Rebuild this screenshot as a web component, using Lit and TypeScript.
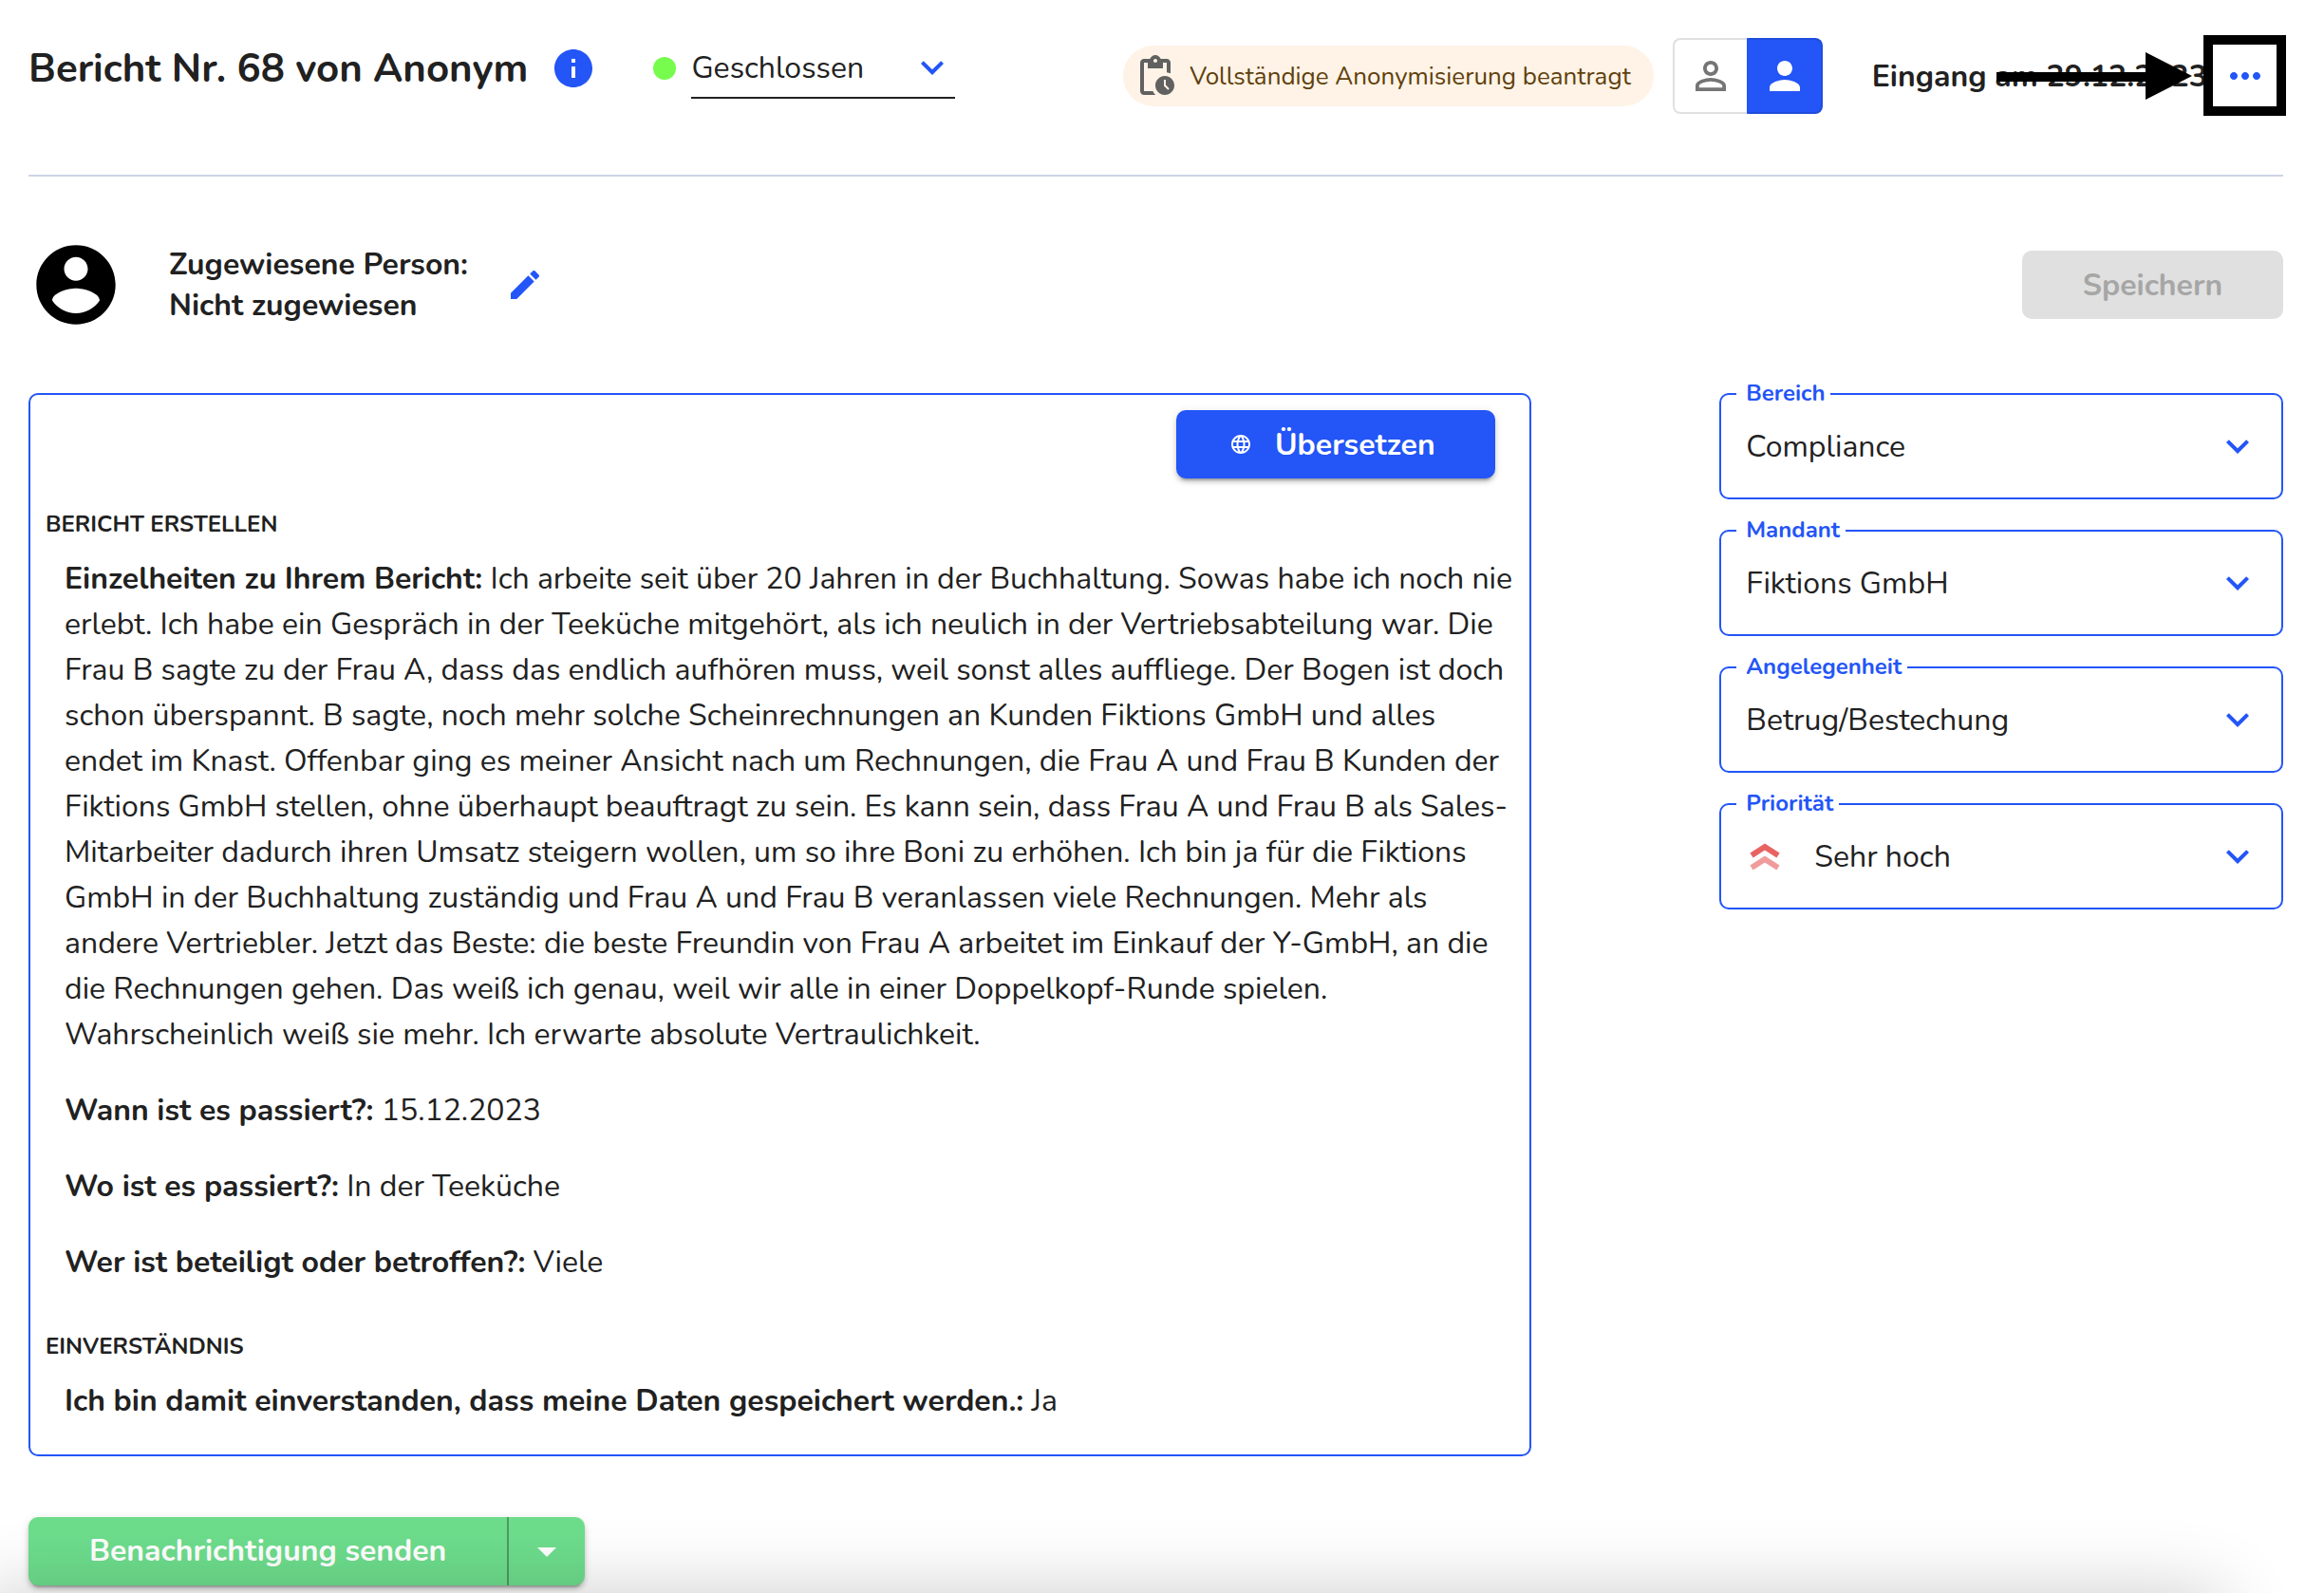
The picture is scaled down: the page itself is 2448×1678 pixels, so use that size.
import { LitElement, html, css, svg, nothing } from "lit";
import { customElement, property, state } from "lit/decorators.js";
import { classMap } from "lit/directives/class-map.js";

const icons = {
  info: "M12 2C6.48 2 2 6.48 2 12s4.48 10 10 10 10-4.48 10-10S17.52 2 12 2zm1 15h-2v-6h2v6zm0-8h-2V7h2v2z",
  expand: "M16.59 8.59 12 13.17 7.41 8.59 6 10l6 6 6-6z",
  pending:
    "M17 12c-2.76 0-5 2.24-5 5s2.24 5 5 5 5-2.24 5-5-2.24-5-5-5zm1.65 7.35L16.5 17.2V14h1v2.79l1.85 1.85-.7.71zM18 3h-3.18C14.4 1.84 13.3 1 12 1s-2.4.84-2.82 2H6c-1.1 0-2 .9-2 2v15c0 1.1.9 2 2 2h6.11c-.59-.57-1.07-1.25-1.42-2H6V5h2v3h8V5h2v5.08c.71.1 1.38.31 2 .6V5c0-1.1-.9-2-2-2zm-6 2c-.55 0-1-.45-1-1s.45-1 1-1 1 .45 1 1-.45 1-1 1z",
  personOutline:
    "M12 5.9c1.16 0 2.1.94 2.1 2.1s-.94 2.1-2.1 2.1S9.9 9.16 9.9 8s.94-2.1 2.1-2.1m0 9c2.97 0 6.1 1.46 6.1 2.1v1.1H5.9V17c0-.64 3.13-2.1 6.1-2.1M12 4C9.79 4 8 5.79 8 8s1.79 4 4 4 4-1.79 4-4-1.79-4-4-4zm0 9c-2.67 0-8 1.34-8 4v3h16v-3c0-2.66-5.33-4-8-4z",
  person:
    "M12 12c2.21 0 4-1.79 4-4s-1.79-4-4-4-4 1.79-4 4 1.79 4 4 4zm0 2c-2.67 0-8 1.34-8 4v2h16v-2c0-2.66-5.33-4-8-4z",
  more: "M6 10c-1.1 0-2 .9-2 2s.9 2 2 2 2-.9 2-2-.9-2-2-2zm12 0c-1.1 0-2 .9-2 2s.9 2 2 2 2-.9 2-2-.9-2-2-2zm-6 0c-1.1 0-2 .9-2 2s.9 2 2 2 2-.9 2-2-.9-2-2-2z",
  account:
    "M12 2C6.48 2 2 6.48 2 12s4.48 10 10 10 10-4.48 10-10S17.52 2 12 2zm0 3c1.66 0 3 1.34 3 3s-1.34 3-3 3-3-1.34-3-3 1.34-3 3-3zm0 14.2c-2.5 0-4.71-1.28-6-3.22.03-1.99 4-3.08 6-3.08 1.99 0 5.97 1.09 6 3.08-1.29 1.94-3.5 3.22-6 3.22z",
  edit: "M3 17.25V21h3.75L17.81 9.94l-3.75-3.75L3 17.25zM20.71 7.04c.39-.39.39-1.02 0-1.41l-2.34-2.34c-.39-.39-1.02-.39-1.41 0l-1.83 1.83 3.75 3.75 1.83-1.83z",
  globe:
    "M11.99 2C6.47 2 2 6.48 2 12s4.47 10 9.99 10C17.52 22 22 17.52 22 12S17.52 2 11.99 2zm6.93 6h-2.95c-.32-1.25-.78-2.45-1.38-3.56 1.84.63 3.37 1.91 4.33 3.56zM12 4.04c.83 1.2 1.48 2.53 1.91 3.96h-3.82c.43-1.43 1.08-2.76 1.91-3.96zM4.26 14C4.1 13.36 4 12.69 4 12s.1-1.36.26-2h3.38c-.08.66-.14 1.32-.14 2s.06 1.34.14 2H4.26zm.82 2h2.95c.32 1.25.78 2.45 1.38 3.56-1.84-.63-3.37-1.9-4.33-3.56zm2.95-8H5.08c.96-1.66 2.49-2.93 4.33-3.56C8.81 5.55 8.35 6.75 8.03 8zM12 19.96c-.83-1.2-1.48-2.53-1.91-3.96h3.82c-.43 1.43-1.08 2.76-1.91 3.96zM14.34 14H9.66c-.09-.66-.16-1.32-.16-2s.07-1.35.16-2h4.68c.09.65.16 1.32.16 2s-.07 1.34-.16 2zm.25 5.56c.6-1.11 1.06-2.31 1.38-3.56h2.95c-.96 1.65-2.49 2.93-4.33 3.56zM16.36 14c.08-.66.14-1.32.14-2s-.06-1.34-.14-2h3.38c.16.64.26 1.31.26 2s-.1 1.36-.26 2h-3.38z",
  dropDown: "m7 10 5 5 5-5z",
};

const icon = (name: keyof typeof icons) =>
  html`<svg class="icon" viewBox="0 0 24 24" aria-hidden="true">${svg`<path d=${icons[name]} />`}</svg>`;

const base = css`
  * {
    box-sizing: border-box;
  }
  button,
  select {
    margin: 0;
    padding: 0;
    border: 0;
    background: none;
    color: inherit;
    font: inherit;
    cursor: pointer;
  }
  select {
    appearance: none;
  }
  .icon {
    display: block;
    flex: none;
    width: 48px;
    height: 48px;
    fill: currentColor;
  }
`;

@customElement("select-field")
class SelectField extends LitElement {
  @property() label = "";
  @property({ attribute: false }) options: string[] = [];
  @property({ type: Boolean }) priority = false;

  static styles = [
    base,
    css`
      :host {
        display: block;
      }
      .field {
        position: relative;
        display: grid;
        grid-template-columns: auto 1fr;
        align-items: center;
        height: 112px;
        border: 2px solid #2355f7;
        border-radius: 10px;
      }
      .label {
        position: absolute;
        top: -18px;
        left: 16px;
        padding: 0 6px 0 10px;
        background: #fff;
        color: #2355f7;
        font-size: 24px;
        font-weight: 700;
        line-height: 32px;
      }
      .select {
        grid-area: 1 / 2;
        width: 100%;
        height: 100%;
        padding: 2px 72px 0 26px;
      }
      .priority .select {
        padding-left: 36px;
      }
      .icon {
        grid-area: 1 / 2;
        justify-self: end;
        margin-right: 22px;
        color: #2355f7;
        pointer-events: none;
      }
      .level {
        grid-area: 1 / 1;
        width: 32px;
        height: 32px;
        margin-left: 30px;
        fill: none;
        stroke: #e96363;
        stroke-width: 6;
      }
      .level-low {
        stroke: #f09c9c;
      }
    `,
  ];

  render() {
    return html`<div class=${classMap({ field: true, priority: this.priority })}>
      <label class="label" for="control">${this.label}</label>
      ${this.priority
        ? html`<svg class="level" viewBox="0 0 32 32" aria-hidden="true">
            <path class="level-low" d="M2 28 16 19 30 28" />
            <path d="M2 15 16 6 30 15" />
          </svg>`
        : nothing}
      <select class="select" id="control">
        ${this.options.map((o) => html`<option>${o}</option>`)}
      </select>
      ${icon("expand")}
    </div>`;
  }
}

interface Answer {
  question: string;
  answer: string;
}

const sections: { title: string; answers: Answer[] }[] = [
  {
    title: "BERICHT ERSTELLEN",
    answers: [
      {
        question: "Einzelheiten zu Ihrem Bericht:",
        answer:
          "Ich arbeite seit über 20 Jahren in der Buchhaltung. Sowas habe ich noch nie erlebt. Ich habe ein Gespräch in der Teeküche mitgehört, als ich neulich in der Vertriebsabteilung war. Die Frau B sagte zu der Frau A, dass das endlich aufhören muss, weil sonst alles auffliege. Der Bogen ist doch schon überspannt. B sagte, noch mehr solche Scheinrechnungen an Kunden Fiktions GmbH und alles endet im Knast. Offenbar ging es meiner Ansicht nach um Rechnungen, die Frau A und Frau B Kunden der Fiktions GmbH stellen, ohne überhaupt beauftragt zu sein. Es kann sein, dass Frau A und Frau B als Sales-Mitarbeiter dadurch ihren Umsatz steigern wollen, um so ihre Boni zu erhöhen. Ich bin ja für die Fiktions GmbH in der Buchhaltung zuständig und Frau A und Frau B veranlassen viele Rechnungen. Mehr als andere Vertriebler. Jetzt das Beste: die beste Freundin von Frau A arbeitet im Einkauf der Y-GmbH, an die die Rechnungen gehen. Das weiß ich genau, weil wir alle in einer Doppelkopf-Runde spielen. Wahrscheinlich weiß sie mehr. Ich erwarte absolute Vertraulichkeit.",
      },
      { question: "Wann ist es passiert?:", answer: "15.12.2023" },
      { question: "Wo ist es passiert?:", answer: "In der Teeküche" },
      { question: "Wer ist beteiligt oder betroffen?:", answer: "Viele" },
    ],
  },
  {
    title: "EINVERSTÄNDNIS",
    answers: [
      { question: "Ich bin damit einverstanden, dass meine Daten gespeichert werden.:", answer: "Ja" },
    ],
  },
];

@customElement("app-root")
class AppRoot extends LitElement {
  @state() private identified = true;

  static styles = [
    base,
    css`
      :host {
        display: block;
        min-height: 100vh;
        padding: 40px 43px 8px 30px;
        background: #fff;
        color: #212121;
        font-family: Nunito, "Open Sans", sans-serif;
        font-size: 32px;
        line-height: 44px;
      }
      h1,
      h2,
      p {
        margin: 0;
      }
      .header {
        display: flex;
        align-items: flex-start;
        justify-content: space-between;
        padding-bottom: 64px;
        border-bottom: 2px solid #ccd5e5;
      }
      .case,
      .meta {
        display: flex;
        align-items: center;
        white-space: nowrap;
      }
      .case {
        height: 64px;
      }
      .meta {
        height: 80px;
      }
      .title,
      .status-select,
      .chip-text,
      .received,
      .save,
      .translate-text {
        padding-top: 2px;
      }
      .title {
        font-size: 42px;
        font-weight: 700;
        line-height: 64px;
      }
      .blue {
        color: #2355f7;
      }
      .info {
        margin: 0 60px 0 24px;
      }
      .dot {
        width: 24px;
        height: 24px;
        margin-right: 16px;
        border-radius: 50%;
        background: #77fc4d;
      }
      .status {
        display: grid;
        align-items: center;
        width: 278px;
        height: 64px;
        border-bottom: 2px solid #212121;
      }
      .status-select {
        grid-area: 1 / 1;
        width: 100%;
        height: 100%;
      }
      .status .icon {
        grid-area: 1 / 1;
        justify-self: end;
        color: #2355f7;
        pointer-events: none;
      }
      .chip {
        display: flex;
        align-items: center;
        gap: 12px;
        height: 64px;
        margin-right: 20px;
        padding: 0 24px 0 10px;
        border-radius: 32px;
        background: #fef3e6;
        color: #5f400c;
        font-size: 26px;
      }
      .chip .icon {
        color: #616161;
      }
      .toggle {
        display: flex;
        margin-right: 52px;
      }
      .toggle-button {
        display: grid;
        place-items: center;
        width: 78px;
        height: 80px;
        border: 2px solid #e0e0e0;
        border-right: 0;
        border-radius: 8px 0 0 8px;
        color: #757575;
      }
      .toggle-button:last-child {
        width: 80px;
        border-right: 2px solid #e0e0e0;
        border-radius: 0 8px 8px 0;
      }
      .toggle .selected {
        border-color: #1f4cdd;
        background: #2355f7;
        color: #fff;
      }
      .toggle .selected:last-child {
        border-left-color: #2355f7;
        border-right-color: #1f4cdd;
      }
      .received {
        font-weight: 700;
      }
      .actions {
        position: relative;
        width: 80px;
        height: 80px;
      }
      .more {
        display: grid;
        place-items: center;
        width: 80px;
        height: 80px;
      }
      .frame {
        position: absolute;
        inset: -3px -3px -2px -4px;
        border: 10px solid #000;
        pointer-events: none;
      }
      .arrow {
        position: absolute;
        top: 15px;
        right: 96px;
        width: 206px;
        height: 50px;
        pointer-events: none;
      }
      .assignee {
        display: flex;
        align-items: center;
        padding: 64px 0;
      }
      .avatar .icon {
        width: 100px;
        height: 100px;
        color: #000;
      }
      .assignee-text {
        margin: 0 40px 0 48px;
        font-weight: 700;
        line-height: 43px;
      }
      .edit .icon {
        width: 40px;
        height: 40px;
      }
      .save {
        width: 275px;
        height: 72px;
        margin-left: auto;
        border-radius: 10px;
        background: #e0e0e0;
        color: #a6a6a6;
        font-weight: 700;
        cursor: default;
      }
      .content {
        display: grid;
        grid-template-columns: 8fr 1fr 3fr;
        align-items: start;
      }
      .report {
        padding: 16px 16px 32px;
        border: 2px solid #2355f7;
        border-radius: 10px;
      }
      .translate {
        display: flex;
        align-items: center;
        justify-content: center;
        gap: 24px;
        width: 336px;
        height: 72px;
        margin: 0 20px 30px auto;
        padding-right: 8px;
        border-radius: 10px;
        background: #2355f7;
        box-shadow: 0 6px 2px -4px rgb(0 0 0 / 20%), 0 4px 4px rgb(0 0 0 / 14%), 0 2px 10px rgb(0 0 0 / 12%);
        color: #fff;
        font-weight: 700;
      }
      .translate .icon {
        width: 24px;
        height: 24px;
      }
      .section-title {
        font-size: 24px;
        font-weight: 700;
        line-height: 36px;
      }
      .answers {
        display: flex;
        flex-direction: column;
        gap: 32px;
        padding: 16px 0 0 20px;
        line-height: 48px;
      }
      .answers + .section-title {
        margin-top: 46px;
      }
      .fields {
        display: flex;
        flex-direction: column;
        gap: 32px;
        grid-column: 3;
      }
      .notify {
        display: inline-flex;
        height: 72px;
        margin-top: 64px;
        border-radius: 10px;
        background: #6ddd8c;
        box-shadow: 0 6px 2px -4px rgb(0 0 0 / 20%), 0 4px 4px rgb(0 0 0 / 14%), 0 2px 10px rgb(0 0 0 / 12%);
        color: #fff;
        font-weight: 700;
      }
      .notify-main {
        padding: 0 64px;
      }
      .notify-menu {
        display: grid;
        place-items: center;
        width: 82px;
        border-left: 2px solid #4c9b62;
      }
      .dock {
        position: fixed;
        right: 108px;
        bottom: -200px;
        left: -20px;
        height: 200px;
        box-shadow: 0 0 80px rgb(0 0 0 / 20%);
        pointer-events: none;
      }
    `,
  ];

  render() {
    return html`
      <header class="header">
        <div class="case">
          <h1 class="title">Bericht Nr. 68 von Anonym</h1>
          <button class="info blue" aria-label="Information">${icon("info")}</button>
          <span class="dot"></span>
          <div class="status">
            <select class="status-select" aria-label="Status">
              <option>Geschlossen</option>
            </select>
            ${icon("expand")}
          </div>
        </div>
        <div class="meta">
          <div class="chip">
            ${icon("pending")}<span class="chip-text">Vollständige Anonymisierung beantragt</span>
          </div>
          <div class="toggle">
            <button
              class=${classMap({ "toggle-button": true, selected: !this.identified })}
              aria-label="Anonym"
              @click=${() => (this.identified = false)}
            >
              ${icon("personOutline")}
            </button>
            <button
              class=${classMap({ "toggle-button": true, selected: this.identified })}
              aria-label="Person"
              @click=${() => (this.identified = true)}
            >
              ${icon("person")}
            </button>
          </div>
          <span class="received">Eingang am 29.12.2023</span>
          <div class="actions">
            <button class="more blue" aria-label="Weitere Aktionen">${icon("more")}</button>
            <div class="frame"></div>
            <svg class="arrow" viewBox="0 0 206 50" aria-hidden="true">
              <path d="M0 21H157V0L206 25 157 50V31H0z" />
            </svg>
          </div>
        </div>
      </header>
      <section class="assignee">
        <div class="avatar">${icon("account")}</div>
        <p class="assignee-text">Zugewiesene Person:<br />Nicht zugewiesen</p>
        <button class="edit blue" aria-label="Bearbeiten">${icon("edit")}</button>
        <button class="save" disabled>Speichern</button>
      </section>
      <main class="content">
        <article class="report">
          <button class="translate">${icon("globe")}<span class="translate-text">Übersetzen</span></button>
          ${sections.map(
            (s) => html`
              <h2 class="section-title">${s.title}</h2>
              <div class="answers">
                ${s.answers.map((a) => html`<p><strong>${a.question}</strong> ${a.answer}</p>`)}
              </div>
            `
          )}
        </article>
        <aside class="fields">
          <select-field label="Bereich" .options=${["Compliance"]}></select-field>
          <select-field label="Mandant" .options=${["Fiktions GmbH"]}></select-field>
          <select-field label="Angelegenheit" .options=${["Betrug/Bestechung"]}></select-field>
          <select-field label="Priorität" .options=${["Sehr hoch"]} priority></select-field>
        </aside>
      </main>
      <div class="notify">
        <button class="notify-main">Benachrichtigung senden</button>
        <button class="notify-menu" aria-label="Weitere Optionen">${icon("dropDown")}</button>
      </div>
      <div class="dock"></div>
    `;
  }
}
